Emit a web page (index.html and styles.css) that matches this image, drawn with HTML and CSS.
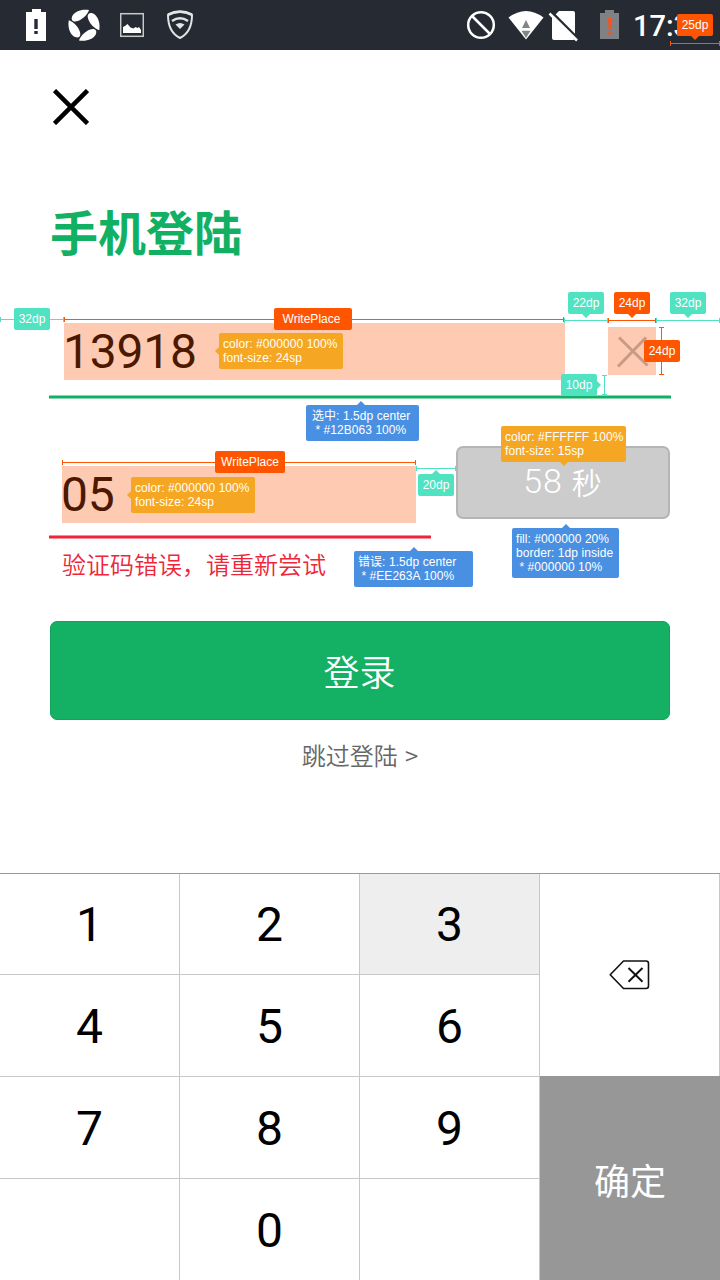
FILE: index.html
```html
<!DOCTYPE html>
<html lang="zh-CN">
<head>
<meta charset="utf-8">
<title>手机登陆</title>
<link rel="stylesheet" href="styles.css">
</head>
<body>
<div class="screen">
  <header class="status">
    <div class="status-left">
      <svg width="20" height="50" viewBox="26 0 20 50"><path fill="#fff" d="M26 12h6V9h9v3h5v29H26z"/><path fill="#262a33" d="M34.3 19h3.400v10h-3.400zM34.300 31h3.400v3h-3.400z"/></svg>
      <svg width="32" height="50" viewBox="-16 -25.3 32 50" fill="#fff">
        <path id="blade" d="M15.200 5C11 4 4 -3 3.700 -8.500C3.600 -12 6 -13 9 -11.800C14 -9.500 16.500 -2 15.200 5z"/>
        <use href="#blade" transform="rotate(90)"/><use href="#blade" transform="rotate(180)"/><use href="#blade" transform="rotate(270)"/>
      </svg>
      <svg width="24" height="50" viewBox="120 0 24 50"><rect x="120.700" y="13.700" width="22.600" height="22.600" fill="none" stroke="#c8caca" stroke-width="1.500"/><path fill="#fff" d="M123 33v-6l2-1 2.500-2 3 3.500 3 1 2-1.500 2 1 1.500-1 2 3v3z"/></svg>
      <svg width="28" height="50" viewBox="166 0 28 50" fill="none" stroke="#e3e5e5"><path stroke-width="2" stroke-linejoin="round" d="M168 15Q180 8.500 192 15C192 25 188 34 180 38C172 34 168 25 168 15z"/><path stroke-width="2.600" d="M168 14.700Q180 8.500 192 14.700M172 21Q180 15.500 188 21"/><path fill="#e3e5e5" stroke="none" d="M175.500 24.500Q180 21.500 184.500 24.500L180 29z"/></svg>
    </div>
    <div class="status-right">
      <svg width="30" height="50" viewBox="466 0 30 50" fill="none" stroke="#fff" stroke-width="2.500"><circle cx="481" cy="25" r="12.800"/><path d="M472 16l18 18"/></svg>
      <svg width="36" height="50" viewBox="508 0 36 50"><path fill="#fff" d="M508.500 17.500Q526 4.500 543.500 17.500L526 39.500z"/><path fill="#80868a" d="M526 20l4 8h-8zM521.500 30.700h9L526 38z"/></svg>
      <svg width="30" height="50" viewBox="548 0 30 50"><path fill="#fff" d="M559 11h14q2 0 2 2v25q0 2-2 2h-19q-2 0-2-2V18z"/><path stroke="#262a33" stroke-width="2.500" d="M551 11.500l29 29"/><path stroke="#fff" stroke-width="2.500" d="M549.500 13.500l27.500 27"/></svg>
      <svg width="20" height="50" viewBox="600 0 20 50"><path fill="#808184" d="M600 13h5v-3h9v3h5v26h-19z"/><path fill="#f8531a" d="M608 18h4.200l-.7 11h-2.800zM608.300 31h3.500v3.300h-3.500z"/></svg>
      <span class="clock">17:35</span>
    </div>
  </header>

  <main class="login">
    <svg class="close" width="36" height="36" viewBox="0 0 36 36"><path d="M1.500 1.500l33 33M34.500 1.500l-33 33" stroke="#000" stroke-width="4.500"/></svg>
    <h1 class="title">手机登陆</h1>
    <div class="phone">
      <div class="entry phone-entry">13918</div>
      <svg class="clear" width="48" height="48" viewBox="0 0 48 48"><path d="M11 10.500L39.500 38.500M38 10.500L10 39.500" stroke="#c99a84" stroke-width="3"/></svg>
    </div>
    <div class="line line-active"></div>
    <div class="verify">
      <div class="verify-field">
        <div class="entry code-entry">05</div>
        <div class="line line-error"></div>
        <p class="error">验证码错误，请重新尝试</p>
      </div>
      <div class="countdown"><span class="seconds">58</span><span>秒</span></div>
    </div>
    <div class="submit">登录</div>
    <div class="skip">跳过登陆 &gt;</div>
  </main>

  <section class="keypad">
    <div class="keys">
      <div class="key">1</div><div class="key">2</div><div class="key pressed">3</div>
      <div class="key">4</div><div class="key">5</div><div class="key">6</div>
      <div class="key">7</div><div class="key">8</div><div class="key">9</div>
      <div class="key"></div><div class="key">0</div><div class="key"></div>
    </div>
    <div class="actions">
      <div class="erase"><svg width="41" height="30" viewBox="0 0 41 30" fill="none" stroke="#111" stroke-width="1.600"><path d="M14.500 1H37q2.500 0 2.500 2.500v22.500q0 2.500-2.500 2.500H14.500L1.200 14.700z" stroke-linejoin="round"/><path stroke-width="1.900" d="M19.500 8l14 13.800M33.500 8l-14 13.800"/></svg></div>
      <div class="confirm">确定</div>
    </div>
  </section>

  <div class="notes">
    <svg class="rules" width="720" height="1280" viewBox="0 0 720 1280" fill="none">
      <path stroke="#50e3c2" d="M0 319.500H64M.5 317v5M63.500 317v5M565 320.500H608M564.500 318v5M607.500 318v5M656 320.500H720M656.500 318v5M719.500 318v5M604.500 375.500V395M602 375.500h5M602 394.500h5M416 468.500H456M416.500 466v5M455.500 466v5"/>
      <path stroke="#f50" d="M670 43.500H720M670.500 41v5M719.500 41v5M64 319.500H564M64.500 317v5M563.500 317v5M608 320.500H656M608.500 318v5M655.500 318v5M661.500 327V375M659 327.500h5M659 374.500h5M62 462.500H416M62.500 460v5M415.500 460v5"/>
    </svg>
    <div class="tag orange down bar-height">25dp</div>
    <div class="tag teal left-inset">32dp</div>
    <div class="tag orange phone-place">WritePlace</div>
    <div class="tag teal down clear-gap">22dp</div>
    <div class="tag orange down clear-width">24dp</div>
    <div class="tag teal down right-inset">32dp</div>
    <div class="tag orange clear-height">24dp</div>
    <div class="tag teal right line-gap">10dp</div>
    <div class="tag spec amber left phone-font">color: #000000 100%<br>font-size: 24sp</div>
    <div class="tag spec blue up active-style">选中: 1.5dp center<br>&nbsp;* #12B063 100%</div>
    <div class="tag orange code-place">WritePlace</div>
    <div class="tag spec amber left code-font">color: #000000 100%<br>font-size: 24sp</div>
    <div class="tag teal up code-gap">20dp</div>
    <div class="tag spec amber down count-font">color: #FFFFFF 100%<br>font-size: 15sp</div>
    <div class="tag spec blue up error-style">错误: 1.5dp center<br>&nbsp;* #EE263A 100%</div>
    <div class="tag spec blue up count-style">fill: #000000 20%<br>border: 1dp inside<br>&nbsp;* #000000 10%</div>
  </div>
</div>
</body>
</html>
```
FILE: styles.css
```css
* { box-sizing: border-box; }
body { margin: 0; background: #fff; font-family: "Noto Sans CJK SC", sans-serif; }
svg { display: block; flex: none; }
.screen { position: relative; width: 720px; height: 1280px; overflow: hidden; display: flex; flex-direction: column; }

.status { height: 50px; flex: none; background: #262a33; display: flex; justify-content: space-between; padding: 0 13px 0 26px; }
.status-left { display: flex; }
.status-left svg:nth-child(2) { margin-left: 22px; }
.status-left svg:nth-child(3) { margin-left: 20px; }
.status-left svg:nth-child(4) { margin-left: 22px; }
.status-right { display: flex; width: 241px; }
.status-right svg:nth-child(2) { margin-left: 12px; }
.status-right svg:nth-child(3) { margin-left: 4px; }
.status-right svg:nth-child(4) { margin-left: 22px; }
.clock { margin-left: 13px; width: 74px; line-height: 53px; font-family: Roboto, sans-serif; font-weight: 500; font-size: 29px; color: #fff; }

.login { height: 823px; flex: none; padding: 39px 50px 0; }
.close { margin: 0 0 0 3px; }
.title { margin: 69px 0 0; height: 72px; line-height: 72px; font-size: 48px; font-weight: 700; color: #12b063; }
.phone { display: flex; justify-content: space-between; align-items: flex-start; padding: 0 14px; margin-top: 57px; height: 72px; }
.entry { height: 57px; line-height: 57px; background: #ffcab2; color: #4c1900; font-family: Roboto, sans-serif; font-size: 48px; letter-spacing: -.2px; text-indent: -1px; }
.phone-entry { width: 501px; }
.clear { margin-top: 4px; background: #ffcab2; }
.line { height: 4px; margin-left: -1px; border-top: 1px solid; border-bottom: 1px solid; }
.line-active { width: 622px; background: #12b063; border-color: #86d5ae; }
.line-error { width: 382px; margin-top: 12px; background: #ee263a; border-color: #f68e98; }
.verify { display: flex; justify-content: space-between; margin-top: 47px; height: 175px; }
.verify-field { width: 382px; padding-top: 20px; }
.code-entry { width: 354px; margin-left: 12px; }
.error { margin: 7px 0 0 12px; line-height: 36px; font-size: 24px; font-weight: 350; color: #ee263a; white-space: nowrap; }
.countdown { width: 214px; height: 73px; display: flex; align-items: center; justify-content: center; gap: 9px; padding: 0 1px 3px 0; border: 2px solid #b5b5b5; border-radius: 7px; background: #ccc; color: #fff; font-size: 30px; font-weight: 350; }
.seconds { font-family: Roboto, sans-serif; font-weight: 300; font-size: 34px; letter-spacing: .8px; }
.submit { height: 99px; border: 1px solid #10a45b; border-radius: 7px; background: #14b063; color: #fff; text-align: center; line-height: 97px; font-size: 36px; font-weight: 350; text-indent: -1px; }
.skip { height: 36px; line-height: 36px; margin-top: 17px; text-align: center; color: #666; font-size: 24px; font-weight: 350; word-spacing: 2px; }

.keypad { flex: 1; display: flex; border-top: 1px solid #999; }
.keys { width: 540px; display: grid; grid-template-columns: repeat(3, 180px); grid-template-rows: 101px 102px 102px 101px; }
.key { border-right: 1px solid #c8c8c8; border-bottom: 1px solid #c8c8c8; display: flex; align-items: center; justify-content: center; font-family: Roboto, sans-serif; font-size: 48px; color: #000; }
.key:nth-child(n+4) { padding-top: 2px; }
.key:nth-child(n+10) { border-bottom: 0; }
.pressed { background: #eee; }
.actions { width: 180px; display: flex; flex-direction: column; }
.erase { height: 202px; padding-right: 1px; border-right: 1px solid #c8c8c8; display: flex; align-items: center; justify-content: center; }
.confirm { height: 204px; background: #979797; color: #fff; text-align: center; line-height: 206px; font-size: 36px; }

/* Redline layer floating over the screen */
.notes { position: absolute; inset: 0; font-family: "Liberation Sans", "Noto Sans CJK SC", sans-serif; font-size: 12px; color: #fff; }
.rules { position: absolute; left: 0; top: 0; }
.tag { position: absolute; width: 36px; height: 22px; line-height: 22px; border-radius: 2px; text-align: center; white-space: pre; background: var(--tone); }
.spec { width: 124px; height: 36px; padding: 4px 0 0 4px; line-height: 14px; text-align: left; letter-spacing: .06px; }
.orange { --tone: #f50; }
.teal { --tone: #50e3c2; }
.amber { --tone: #f5a623; }
.blue { --tone: #4a90e2; }
.down::after, .up::after, .left::after, .right::after { content: ""; position: absolute; border: 4px solid transparent; }
.down::after { top: 100%; left: calc(50% - 4px); border-bottom: 0; border-top-color: var(--tone); }
.up::after { bottom: 100%; left: calc(50% - 4px); border-top: 0; border-bottom-color: var(--tone); }
.left::after { right: 100%; top: calc(50% - 4px); border-left: 0; border-right-color: var(--tone); }
.right::after { left: 100%; top: calc(50% - 4px); border-right: 0; border-left-color: var(--tone); }
.bar-height { left: 677px; top: 14px; }
.left-inset { left: 14px; top: 308px; }
.phone-place { left: 274px; top: 308px; width: 78px; padding-right: 3px; }
.clear-gap { left: 568px; top: 292px; }
.clear-width { left: 614px; top: 292px; }
.right-inset { left: 670px; top: 292px; }
.clear-height { left: 644px; top: 340px; }
.line-gap { left: 561px; top: 374px; }
.phone-font { left: 219px; top: 333px; }
.active-style { left: 306px; top: 405px; width: 113px; padding-left: 6px; }
.active-style::after { left: 51px; }
.code-place { left: 215px; top: 451px; width: 70px; }
.code-font { left: 131px; top: 477px; }
.code-gap { left: 418px; top: 474px; }
.count-font { left: 501px; top: 426px; width: 125px; }
.error-style { left: 354px; top: 551px; width: 119px; }
.count-style { left: 512px; top: 528px; width: 107px; height: 50px; }
```
